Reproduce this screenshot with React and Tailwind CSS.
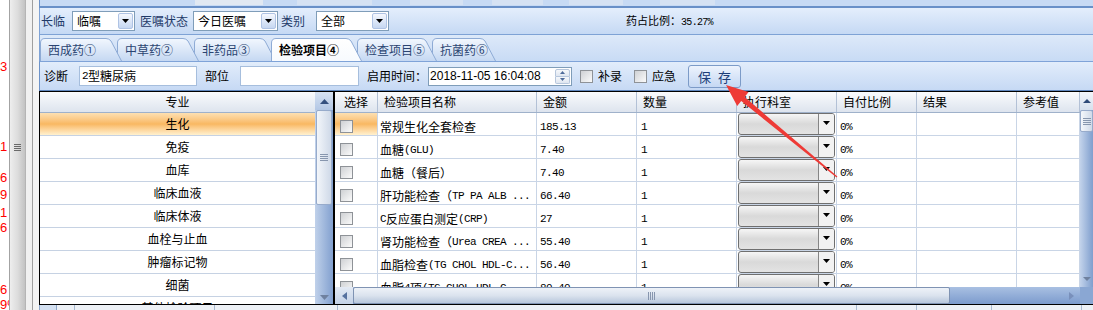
import React from 'react';

const mono = "[font-family:'Liberation_Mono',monospace] text-[11px] tracking-[-0.6px] whitespace-pre";

function Mixed({ t }) {
  return t.split(/([\x20-\x7e]+)/).filter(Boolean).map((s, i) =>
    /^[\x20-\x7e]+$/.test(s) ? (
      <span key={i} className={mono}>{s}</span>
    ) : (
      <span key={i}>{s}</span>
    )
  );
}

function Tri({ dir = 'down', color = '#000', w = 7, h = 4 }) {
  let d;
  if (dir === 'down') d = `M0 0H${w}L${w / 2} ${h}Z`;
  else if (dir === 'up') d = `M0 ${h}H${w}L${w / 2} 0Z`;
  else if (dir === 'left') d = `M${h} 0V${w}L0 ${w / 2}Z`;
  else d = `M0 0V${w}L${h} ${w / 2}Z`;
  const side = dir === 'left' || dir === 'right';
  return (
    <svg width={side ? h : w} height={side ? w : h} className="block">
      <path d={d} fill={color} />
    </svg>
  );
}

function GripH() {
  return (
    <div className="flex flex-col gap-px">
      <div className="h-px w-[8px] bg-[#8796ae]" />
      <div className="h-px w-[8px] bg-[#8796ae]" />
      <div className="h-px w-[8px] bg-[#8796ae]" />
      <div className="h-px w-[8px] bg-[#8796ae]" />
    </div>
  );
}

function GripV() {
  return (
    <div className="flex gap-px">
      <div className="h-[8px] w-px bg-[#8796ae]" />
      <div className="h-[8px] w-px bg-[#8796ae]" />
      <div className="h-[8px] w-px bg-[#8796ae]" />
      <div className="h-[8px] w-px bg-[#8796ae]" />
    </div>
  );
}

function Check() {
  return <div className="h-[13px] w-[13px] shrink-0 border border-[#8e9297] bg-gradient-to-br from-[#cfd1d4] to-[#fbfbfb]" />;
}

function Select({ w, value }) {
  return (
    <div className={`flex h-[20px] items-center border border-[#7f9db9] bg-white ${w}`}>
      <span className="flex-1 pl-[4px] leading-none text-black">{value}</span>
      <div className="mr-px flex h-[16px] w-[15px] items-center justify-center rounded-[2px] border border-[#afc3e4] bg-gradient-to-b from-[#f5f8fe] to-[#c6d7f1]">
        <Tri w={7} h={4} />
      </div>
    </div>
  );
}

function LeftStrip() {
  const nums = [
    ['3', 'mt-[60px]'],
    ['1', 'mt-[66px]'],
    ['6', 'mt-[17px]'],
    ['9', 'mt-[3px]'],
    ['1', 'mt-[4px]'],
    ['6', 'mt-[1px]'],
    ['6', 'mt-[48px]'],
    ['9%', 'mt-px'],
  ];
  return (
    <div className="flex h-full w-[39px] shrink-0">
      <div className="flex w-[9px] flex-col overflow-hidden bg-white">
        {nums.map(([n, m], i) => (
          <div key={i} className={`${m} h-[14px] whitespace-nowrap text-[13px] leading-[14px] text-[#ff0000] [font-family:'Liberation_Sans',sans-serif]`}>
            {n}
          </div>
        ))}
      </div>
      <div className="w-px bg-[#a3a3a3]" />
      <div className="flex w-[15px] flex-col items-center bg-gradient-to-r from-[#eeeeee] via-[#dddddd] to-[#c3c3c3]">
        <div className="mt-[144px] flex flex-col gap-px">
          <div className="h-px w-[7px] bg-[#6a6a6a]" />
          <div className="h-px w-[7px] bg-[#6a6a6a]" />
          <div className="h-px w-[7px] bg-[#6a6a6a]" />
          <div className="h-px w-[7px] bg-[#6a6a6a]" />
        </div>
      </div>
      <div className="w-px bg-[#b5b5b5]" />
      <div className="w-[6px] bg-[#f1f1f1]" />
      <div className="w-px bg-[#9f9f9f]" />
      <div className="w-[6px] bg-[#f4f4f4]" />
    </div>
  );
}

const tabs = [
  { label: '西成药①', w: 82, cls: 'w-[82px] z-[6]' },
  { label: '中草药②', w: 82, cls: 'w-[82px] z-[5]' },
  { label: '非药品③', w: 82, cls: 'w-[82px] z-[4]' },
  { label: '检验项目④', w: 91, cls: 'w-[91px] z-[10]', active: true },
  { label: '检查项目⑤', w: 80, cls: 'w-[80px] z-[2]' },
  { label: '抗菌药⑥', w: 64, cls: 'w-[64px] z-[1]' },
];

function Tab({ t, i }) {
  const W = t.w;
  const d = `M0.5 23 V5 Q0.5 0.5 5 0.5 H${W - 16} Q${W - 13} 0.5 ${W - 11} 3 L${W - 0.5} 23`;
  return (
    <div className={`relative h-[23px] shrink-0 ${i > 0 ? '-ml-[5px]' : ''} ${t.cls}`}>
      <svg className="absolute left-0 top-0" width={W} height="23">
        <defs>
          <linearGradient id={`tg${i}`} x1="0" y1="0" x2="0" y2="1">
            <stop offset="0" stopColor={t.active ? '#ffffff' : '#f2f7fe'} />
            <stop offset="1" stopColor={t.active ? '#f7fafe' : '#c5d8f2'} />
          </linearGradient>
        </defs>
        <path d={d} fill={`url(#tg${i})`} stroke="#8eabd5" />
      </svg>
      <span
        className={`relative block pl-[8px] pt-[4px] leading-[16px] ${
          t.active ? 'font-bold text-black' : 'text-[#2b4471]'
        }`}
      >
        {t.label}
      </span>
    </div>
  );
}

const listItems = ['生化', '免疫', '血库', '临床血液', '临床体液', '血栓与止血', '肿瘤标记物', '细菌', '其他检验项目'];

const cols = [
  { k: 'sel', w: 'w-[43px]', h: '选择' },
  { k: 'name', w: 'w-[159px]', h: '检验项目名称' },
  { k: 'amt', w: 'w-[100px]', h: '金额' },
  { k: 'qty', w: 'w-[100px]', h: '数量' },
  { k: 'dept', w: 'w-[100px]', h: '执行科室' },
  { k: 'ratio', w: 'w-[80px]', h: '自付比例' },
  { k: 'res', w: 'w-[100px]', h: '结果' },
  { k: 'ref', w: 'w-[63px]', h: '参考值' },
];

const rows = [
  ['常规生化全套检查', '185.13'],
  ['血糖(GLU)', '7.40'],
  ['血糖（餐后）', '7.40'],
  ['肝功能检查（TP PA ALB ...', '66.40'],
  ['C反应蛋白测定(CRP)', '27'],
  ['肾功能检查（Urea CREA ...', '55.40'],
  ['血脂检查(TG CHOL HDL-C...', '56.40'],
  ['血脂4项(TG CHOL HDL-C...', '80.40'],
];

function DeptSelect() {
  return (
    <div className="flex h-[22px] w-full overflow-hidden rounded-[3px] border border-[#6f6f6f] bg-gradient-to-b from-[#f6f6f6] via-[#d9d9d9] to-[#e3e3e3]">
      <div className="flex-1" />
      <div className="flex w-[16px] justify-center border-l border-[#858585] bg-[#f2f2f2] pt-[7px]">
        <Tri w={7} h={4} />
      </div>
    </div>
  );
}

function Cell({ c, r, i }) {
  const base = `flex h-full shrink-0 border-r border-[#c9d5e6] ${c.w}`;
  if (c.k === 'sel')
    return (
      <div
        className={`${base} pl-[5px] pt-[7px] ${
          i === 0 ? 'bg-gradient-to-b from-[#fde0b2] via-[#f9b862] to-[#fff1cf]' : ''
        }`}
      >
        <Check />
      </div>
    );
  if (c.k === 'dept')
    return (
      <div className={`${base} px-px`}>
        <DeptSelect />
      </div>
    );
  const text = { name: r[0], amt: r[1], qty: '1', ratio: '0%', res: '', ref: '' }[c.k];
  const pad = c.k === 'name' ? 'pl-[2px]' : c.k === 'qty' ? 'pl-[4px]' : 'pl-[3px]';
  return (
    <div className={`${base} ${pad} items-center overflow-hidden whitespace-nowrap pt-[6px] leading-[16px]`}>
      <Mixed t={text} />
    </div>
  );
}

function RightGrid() {
  return (
    <div className="flex w-[759px] shrink-0 flex-col border-y border-l border-black bg-white">
      <div className="flex h-[195px]">
        <div className="flex w-[745px] flex-col">
          <div className="flex h-[21px] shrink-0 border-b border-[#9fb1ca] bg-gradient-to-b from-[#fafbfd] to-[#dde4ee]">
            {cols.map((c) => (
              <div
                key={c.k}
                className={`flex h-full shrink-0 items-center border-r border-[#b3c1d6] leading-none ${c.w} ${
                  c.k === 'sel' ? 'justify-center' : 'pl-[6px]'
                }`}
              >
                {c.h}
              </div>
            ))}
          </div>
          <div className="flex-1 overflow-hidden">
            {rows.map((r, i) => (
              <div key={i} className="flex h-[23px] border-b border-[#c9d5e6]">
                {cols.map((c) => (
                  <Cell key={c.k} c={c} r={r} i={i} />
                ))}
              </div>
            ))}
          </div>
        </div>
        <div className="flex w-[13px] flex-col bg-gradient-to-r from-[#c3d3eb] to-[#7f9ecd]">
          <div className="flex h-[18px] items-center justify-center bg-gradient-to-b from-[#f3f6fa] to-[#d6e0ee]">
            <Tri dir="up" color="#2f4a78" w={8} h={4} />
          </div>
          <div className="flex h-[22px] items-center justify-center rounded-[2px] border border-[#97abcb] bg-gradient-to-r from-[#f4f7fb] to-[#d0dae9]">
            <GripH />
          </div>
          <div className="flex-1" />
          <div className="flex h-[17px] items-center justify-center">
            <Tri dir="down" color="#6f819f" w={8} h={4} />
          </div>
        </div>
      </div>
      <div className="flex h-[17px]">
        <div className="flex w-[745px] bg-gradient-to-b from-[#a9c0e2] to-[#7c9bcd]">
          <div className="flex w-[18px] items-center justify-center bg-gradient-to-b from-[#e3eaf4] to-[#c4d2e7]">
            <Tri dir="left" color="#56729f" w={8} h={5} />
          </div>
          <div className="flex w-[597px] items-center justify-center rounded-[2px] border border-[#7f93b3] bg-gradient-to-b from-[#eef2f8] via-[#dbe3ee] to-[#b8c7dc]">
            <GripV />
          </div>
          <div className="flex-1" />
          <div className="flex w-[18px] items-center justify-center">
            <Tri dir="right" color="#7990bb" w={8} h={5} />
          </div>
        </div>
        <div className="w-[13px] bg-[#8aa7d3]" />
      </div>
    </div>
  );
}

function LeftList() {
  return (
    <div className="flex w-[295px] shrink-0 border border-black bg-white">
      <div className="flex w-[275px] flex-col overflow-hidden">
        <div className="flex h-[21px] shrink-0 items-center justify-center border-b border-[#9fb1ca] bg-gradient-to-b from-[#fafbfd] to-[#dde4ee] leading-none">
          专业
        </div>
        {listItems.map((it, i) => (
          <div
            key={it}
            className={`flex h-[23px] shrink-0 items-center justify-center border-b border-[#c6d2e3] leading-none ${
              i === 0 ? 'bg-gradient-to-b from-[#fde0b2] via-[#f9b862] to-[#fff1cf]' : ''
            }`}
          >
            {it}
          </div>
        ))}
      </div>
      <div className="flex w-[18px] flex-col bg-gradient-to-r from-[#c0d1ea] to-[#82a0cf]">
        <div className="flex h-[18px] items-center justify-center bg-gradient-to-b from-[#d7e2f2] to-[#b3c7e5]">
          <Tri dir="up" color="#34507f" w={9} h={5} />
        </div>
        <div className="mx-px flex h-[95px] items-center justify-center rounded-[2px] border border-[#97abcb] bg-gradient-to-r from-[#f3f6fa] to-[#cfd9e8]">
          <GripH />
        </div>
        <div className="flex-1" />
        <div className="flex h-[14px] items-center justify-center">
          <Tri dir="down" color="#6f819f" w={9} h={5} />
        </div>
      </div>
    </div>
  );
}

function Arrow() {
  return (
    <svg className="pointer-events-none absolute left-0 top-0 z-20" width="1093" height="310">
      <polygon
        points="726,85 748.6,92.1 744.6,97 837.4,176.5 836.6,177.5 741.2,101 737.2,105.9"
        fill="#ee3a36"
      />
    </svg>
  );
}

export default function App() {
  return (
    <div className="relative flex h-[310px] w-[1093px] overflow-hidden bg-white text-[12px] text-black [font-family:'Noto_Sans_CJK_SC','Liberation_Sans',sans-serif]">
      <LeftStrip />
      <div className="flex w-[1054px] shrink-0 flex-col">
        {/* cut-off row above */}
        <div className="flex h-[6px] border-l border-[#6d93c9] bg-[#c7daf4]">
          <div className="ml-[155px] h-[5px] w-[68px] bg-[#e1e8f2]" />
          <div className="ml-[34px] h-[5px] w-[75px] bg-[#d6e2f3]" />
          <div className="ml-[38px] h-[5px] w-[53px] bg-[#d6e2f3]" />
          <div className="ml-[29px] h-[5px] w-[51px] bg-[#d6e2f3]" />
          <div className="ml-[26px] h-[5px] w-[54px] bg-[#d6e2f3]" />
          <div className="ml-[37px] h-[5px] w-[55px] bg-[#d6e2f3]" />
        </div>
        <div className="h-[2px] bg-[#6990c8]" />

        {/* filter row */}
        <div className="flex h-[27px] items-center border-b border-l border-[#7ea2d5] bg-gradient-to-b from-[#e4eefc] to-[#c5d9f4] pl-px">
          <span className="leading-none text-[#1f3a68]">长临</span>
          <div className="ml-[7px]">
            <Select w="w-[63px]" value="临嘱" />
          </div>
          <span className="ml-[5px] leading-none text-[#1f3a68]">医嘱状态</span>
          <div className="ml-[5px]">
            <Select w="w-[85px]" value="今日医嘱" />
          </div>
          <span className="ml-[3px] leading-none text-[#1f3a68]">类别</span>
          <div className="ml-[11px]">
            <Select w="w-[73px]" value="全部" />
          </div>
          <span className="ml-[237px] text-[11px] leading-none">
            药占比例：<span className="[font-family:'Liberation_Mono',monospace] text-[10px] tracking-[-0.7px]">35.27%</span>
          </span>
        </div>

        {/* tabs */}
        <div className="flex h-[26px] items-end border-l border-[#7ea2d5] bg-gradient-to-b from-[#dde9f9] to-[#c8dbf5]">
          {tabs.map((t, i) => (
            <Tab key={t.label} t={t} i={i} />
          ))}
        </div>

        {/* form row */}
        <div className="flex h-[30px] items-center border-y border-l border-t-[#7fa3d8] border-b-[#5f86bd] border-l-[#6d93c9] bg-gradient-to-b from-[#e2edfb] to-[#c6d9f4] pl-[4px]">
          <span className="leading-none">诊断</span>
          <div className="ml-[11px] flex h-[20px] w-[118px] items-center border border-[#a6bedd] bg-white pl-[2px] leading-none">
            <Mixed t="2型糖尿病" />
          </div>
          <span className="ml-[8px] leading-none">部位</span>
          <div className="ml-[11px] h-[20px] w-[119px] border border-[#a6bedd] bg-white" />
          <span className="ml-[8px] leading-none">启用时间：</span>
          <div className="ml-px flex h-[19px] w-[144px] items-center border border-[#7f9db9] bg-white pl-[1px]">
            <span className="[font-family:'Liberation_Sans',sans-serif] text-[12px] leading-none">2018-11-05 16:04:08</span>
            <div className="ml-auto mr-px flex h-[15px] w-[15px] flex-col">
              <div className="flex flex-1 items-center justify-center rounded-t-[2px] border border-[#b6c6dc] bg-gradient-to-b from-[#f6f8fb] to-[#dfe6f0]">
                <Tri dir="up" color="#4d6a99" w={5} h={3} />
              </div>
              <div className="flex flex-1 items-center justify-center rounded-b-[2px] border border-t-0 border-[#b6c6dc] bg-gradient-to-b from-[#f6f8fb] to-[#dfe6f0]">
                <Tri dir="down" color="#4d6a99" w={5} h={3} />
              </div>
            </div>
          </div>
          <div className="ml-[8px]">
            <Check />
          </div>
          <span className="ml-[5px] leading-none">补录</span>
          <div className="ml-[12px]">
            <Check />
          </div>
          <span className="ml-[5px] leading-none">应急</span>
          <button className="ml-[12px] flex h-[23px] w-[53px] items-center justify-center gap-[7px] rounded-[3px] border border-[#7c9bc8] bg-gradient-to-b from-[#edf3fd] to-[#c5d8f3] text-[13px] leading-none text-[#1c3d78]">
            <span>保</span>
            <span>存</span>
          </button>
        </div>

        {/* grids */}
        <div className="flex h-[214px] bg-[#d0e0f5]">
          <LeftList />
          <RightGrid />
        </div>

        {/* bottom strip */}
        <div className="flex h-[5px] bg-[#edf1f6]">
          <div className="w-[18px] border-x border-[#8ea7cb] bg-[#d4e1f2]" />
          <div className="w-[18px] border-r border-[#a9bbd2]" />
          <div className="w-[140px] border-r border-[#a9bbd2]" />
          <div className="w-[123px] border-r border-[#a9bbd2]" />
          <div className="w-[519px] border-r border-[#a9bbd2]" />
          <div className="w-[60px] border-r border-[#a9bbd2]" />
          <div className="w-[75px] border-r border-[#a9bbd2]" />
          <div className="w-[90px] border-r border-[#a9bbd2]" />
        </div>
      </div>
      <Arrow />
    </div>
  );
}
